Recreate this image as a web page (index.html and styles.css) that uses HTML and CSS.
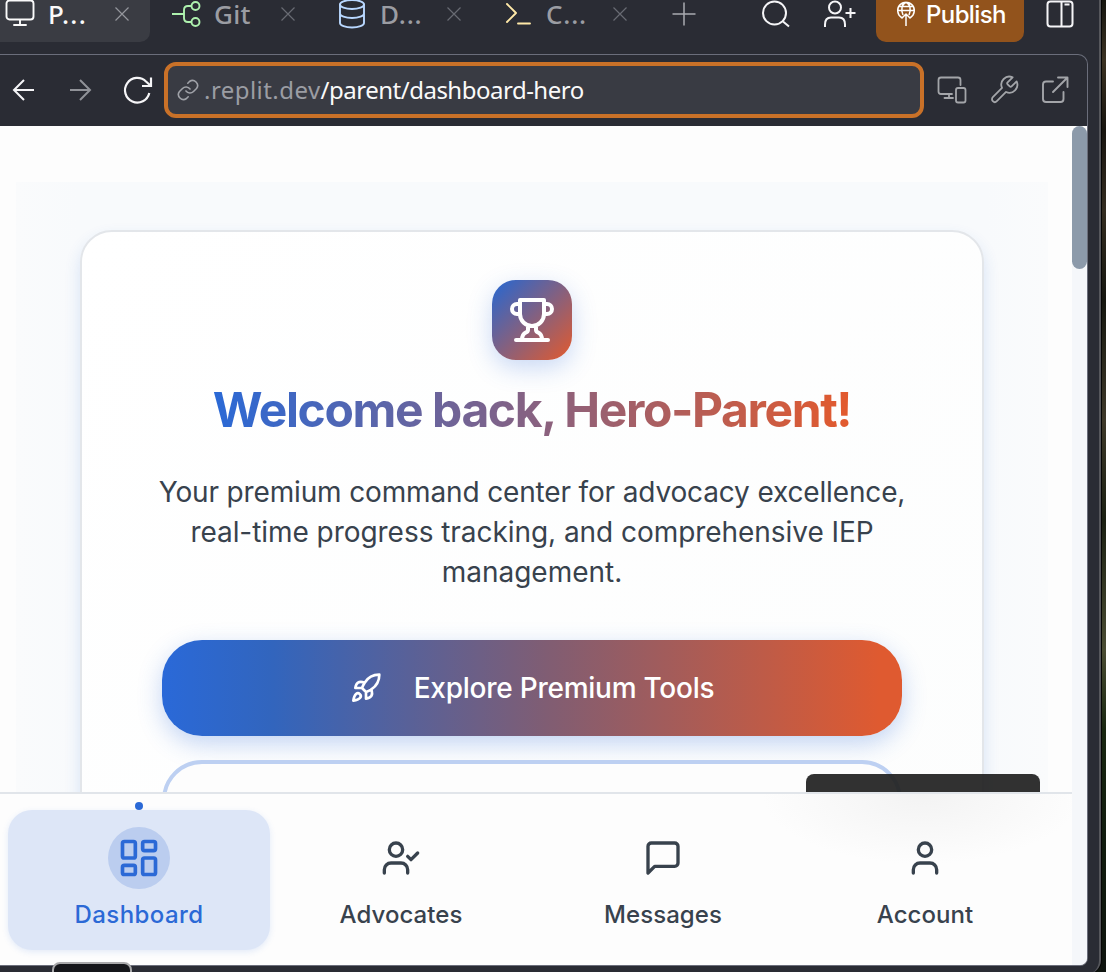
FILE: index.html
```html
<!DOCTYPE html>
<html lang="en">
<head>
<meta charset="utf-8">
<title>Parent dashboard</title>
<link rel="stylesheet" href="styles.css">
</head>
<body>
<div class="window">
  <header class="tabbar">
    <div class="tab tab-active">
      <svg class="tab-icon" viewBox="0 0 32 32"><rect x="2.5" y="2.5" width="27" height="19" rx="3"/><path d="M16 22v5M10 27h12"/></svg>
      <span class="tab-name name-p">P...</span>
      <svg class="tab-close" viewBox="0 0 16 16"><path d="M1.5 1.5l13 13M14.5 1.5l-13 13"/></svg>
    </div>
    <div class="tab">
      <svg class="tab-icon green" viewBox="0 0 32 32"><path d="M2 16h12M22 8h-4q-4 0-4 4v8q0 4 4 4h4" class="branch"/><circle cx="25.500" cy="8" r="4"/><circle cx="25.500" cy="24" r="4"/></svg>
      <span class="tab-name name-git">Git</span>
      <svg class="tab-close" viewBox="0 0 16 16"><path d="M1.500 1.500l13 13M14.500 1.500l-13 13"/></svg>
    </div>
    <div class="tab">
      <svg class="tab-icon blue" viewBox="0 0 32 32"><ellipse cx="16" cy="6.500" rx="12" ry="4.500"/><path d="M4 6.500v18.500c0 2.500 5.400 4.500 12 4.500s12-2 12-4.500V6.500M4 15.500c0 2.500 5.400 4.500 12 4.500s12-2 12-4.500"/></svg>
      <span class="tab-name name-d">D...</span>
      <svg class="tab-close" viewBox="0 0 16 16"><path d="M1.500 1.500l13 13M14.500 1.500l-13 13"/></svg>
    </div>
    <div class="tab">
      <svg class="tab-icon yellow" viewBox="0 0 32 32"><path d="M5 6l9 9-9 9M16 25.500h12"/></svg>
      <span class="tab-name name-c">C...</span>
      <svg class="tab-close" viewBox="0 0 16 16"><path d="M1.500 1.500l13 13M14.500 1.500l-13 13"/></svg>
    </div>
    <svg class="new-tab" viewBox="0 0 24 24"><path d="M12 .500v23M.500 12h23"/></svg>
    <div class="actions">
      <svg class="act search" viewBox="0 0 32 32"><circle cx="14.500" cy="15" r="11.500"/><path d="M23 23.500l6 5"/></svg>
      <svg class="act invite" viewBox="0 0 36 32"><circle cx="13" cy="9.500" r="6"/><path d="M3 29v-2.500q0-7 6-7h8q6 0 6 7V29M28.500 10v10M23.500 15h10"/></svg>
      <button class="publish">
        <svg viewBox="0 0 20 28"><path d="M5.500 18.500A8.300 8.300 0 1 1 14.500 18.500M2 11.500h16M7 16C4.500 10 6 5 10 3.200 14 5 15.500 10 13 16M10 27V15M5.500 19.500l4.500-4.500 4.500 4.500M3.500 7.500h13"/></svg>
        <span>Publish</span>
      </button>
      <svg class="act layout" viewBox="0 0 32 32"><rect x="3.500" y="3.500" width="25" height="25" rx="3"/><path d="M17.500 3.500v25M20.500 6.500h5"/></svg>
    </div>
  </header>

  <section class="pane">
    <div class="toolbar">
      <svg class="nav-arrow" viewBox="0 0 24 24"><path d="M22 12H2.500M12 2l-10 10 10 10"/></svg>
      <svg class="nav-arrow dim" viewBox="0 0 24 24"><path d="M2 12h19.500M12 2l10 10-10 10"/></svg>
      <svg class="reload" viewBox="0 0 32 32"><path d="M28.300 19A12.300 12.300 0 1 1 25 7.500L30 12M30 3.500V12h-9"/></svg>
      <div class="address">
        <svg viewBox="0 0 24 24"><path d="M10 13a5 5 0 0 0 7.500.5l3-3a5 5 0 0 0-7-7l-1.700 1.700M14 11a5 5 0 0 0-7.500-.5l-3 3a5 5 0 0 0 7 7l1.700-1.700"/></svg>
        <span class="url"><span class="host">.replit.dev</span>/parent/dashboard-hero</span>
      </div>
      <svg class="tool devices" viewBox="0 0 32 32"><path d="M16 20H5q-2.500 0-2.500-2.500V6Q2.500 3.500 5 3.500h17q2.500 0 2.500 2.500v5M13 20v4M8.500 24H17"/><rect x="20" y="14" width="9.500" height="14.500" rx="2"/></svg>
      <svg class="tool wrench" viewBox="0 0 24 24"><path d="M14.700 6.300a1 1 0 0 0 0 1.400l1.600 1.600a1 1 0 0 0 1.400 0l3.770-3.770a6 6 0 0 1-7.940 7.940l-6.910 6.910a2.120 2.120 0 0 1-3-3l6.910-6.910a6 6 0 0 1 7.940-7.940l-3.760 3.760z"/></svg>
      <svg class="tool external" viewBox="0 0 32 32"><path d="M14 7.500H7Q4 7.500 4 10.500V25q0 3 3 3h14.500q3 0 3-3v-7M19 3.500h9.500V13M28.500 3.500L14 18"/></svg>
    </div>

    <div class="viewport">
      <main class="page">
        <div class="hero-area">
          <div class="card">
            <div class="trophy">
              <svg viewBox="0 0 24 24"><path d="M6 9H4.500a2.500 2.500 0 0 1 0-5H6M18 9h1.500a2.500 2.500 0 0 0 0-5H18M4 22h16M10 14.660V17c0 .55-.47.98-.97 1.210C7.850 18.750 7 20.240 7 22M14 14.660V17c0 .55.470.98.970 1.210C16.150 18.750 17 20.240 17 22M18 2H6v7a6 6 0 0 0 12 0V2Z"/></svg>
            </div>
            <h1>Welcome back, Hero-Parent!</h1>
            <p><span class="line-first">Your premium command center for advocacy excellence,</span><br><span class="line-second">real-time progress tracking, and comprehensive IEP</span><br>management.</p>
            <button class="primary">
              <svg viewBox="0 0 24 24"><path d="M4.500 16.500c-1.500 1.260-2 5-2 5s3.740-.5 5-2c.710-.840.700-2.130-.090-2.910a2.180 2.180 0 0 0-2.910-.090zM12 15l-3-3a22 22 0 0 1 2-3.950A12.880 12.880 0 0 1 22 2c0 2.720-.780 7.500-6 11a22.350 22.350 0 0 1-4 2zM9 12H4s.550-3.030 2-4c1.620-1.080 5 0 5 0M12 15v5s3.030-.550 4-2c1.080-1.620 0-5 0-5"/></svg>
              <span>Explore Premium Tools</span>
            </button>
            <div class="secondary"></div>
          </div>
        </div>
        <div class="toast"></div>
        <nav class="bottom-nav">
          <a class="item item-active">
            <i class="dot"></i>
            <span class="bubble"><svg viewBox="0 0 24 24"><rect x="3" y="3" width="7" height="9" rx="1"/><rect x="14" y="3" width="7" height="5" rx="1"/><rect x="14" y="12" width="7" height="9" rx="1"/><rect x="3" y="16" width="7" height="5" rx="1"/></svg></span>
            <span class="label">Dashboard</span>
          </a>
          <a class="item">
            <span class="bubble"><svg viewBox="0 0 24 24"><path d="M16 21v-2a4 4 0 0 0-4-4H6a4 4 0 0 0-4 4v2"/><circle cx="9" cy="7" r="4"/><path d="M16 11l2 2 4-4"/></svg></span>
            <span class="label">Advocates</span>
          </a>
          <a class="item">
            <span class="bubble"><svg viewBox="0 0 24 24"><path d="M21 15a2 2 0 0 1-2 2H7l-4 4V5a2 2 0 0 1 2-2h14a2 2 0 0 1 2 2z"/></svg></span>
            <span class="label">Messages</span>
          </a>
          <a class="item">
            <span class="bubble"><svg viewBox="0 0 24 24"><path d="M19 21v-2a4 4 0 0 0-4-4H9a4 4 0 0 0-4 4v2"/><circle cx="12" cy="7" r="4"/></svg></span>
            <span class="label">Account</span>
          </a>
        </nav>
      </main>
      <div class="scrollbar"><div class="thumb"></div></div>
    </div>
  </section>
  <div class="dock-tip"></div>
</div>
</body>
</html>
```
FILE: styles.css
```css
* { box-sizing: border-box; }
body {
  margin: 0;
  width: 1106px;
  height: 972px;
  overflow: hidden;
  background: linear-gradient(180deg, #15150f 0, #3a3122 60px, #17140f 130px, #332c20 210px, #15160f 300px, #3d3829 420px, #1a1f12 520px, #4a4c33 650px, #182610 730px, #101b0e 850px, #0e130e 100%);
  font-family: Inter, "Liberation Sans", sans-serif;
}
svg { display: block; flex: none; fill: none; stroke: currentColor; stroke-linecap: round; stroke-linejoin: round; }
button { font: inherit; border: 0; padding: 0; }

.window {
  position: relative;
  width: 1101px;
  height: 974px;
  background: #2a2c34;
  border-right: 2px solid #56575c;
  border-radius: 0 0 14px 0;
  box-shadow: 0 0 0 1px #050505;
}

/* Tab bar */
.tabbar { display: flex; height: 54px; align-items: flex-start; color: #f5f5f7; }
.tab {
  display: flex;
  width: 150px;
  height: 42px;
  margin-right: 16px;
  padding: 0 20px 0 4px;
  color: #9b9da3;
}
.tab-active { background: #3a3c43; color: #fafafa; border-radius: 0 0 10px 0; }
.tab-icon { width: 32px; height: 32px; margin: -2px 12px 0 0; stroke-width: 1.9; }
.branch { stroke-linecap: butt; }
.tab-name { flex: 1; font: 500 26px/28px "Noto Sans", sans-serif; letter-spacing: .3px; white-space: nowrap; }
.name-p { letter-spacing: 1.4px; }
.name-d, .name-c { letter-spacing: .8px; }
.tab-close { width: 16px; height: 16px; margin: 6px 0 0; stroke-width: 1.200; color: #686b73; stroke-linecap: butt; }
.tab-active .tab-close { color: #94969c; }
.green { color: #aef2ae; }
.blue { color: #b9d8ff; }
.yellow { color: #ffe9a8; }
.new-tab { width: 24px; height: 24px; margin: 2px 0 0 8px; stroke-width: 1.500; color: #a9abb0; stroke-linecap: butt; }
.actions { display: flex; margin-left: 64px; }
.act { height: 32px; margin-top: -2px; stroke-width: 2; stroke-linecap: butt; }
.search { width: 32px; }
.invite { width: 36px; margin-left: 30px; }
.publish {
  display: flex;
  width: 148px;
  height: 42px;
  margin-left: 18px;
  padding: 0 0 0 20px;
  background: #92531c;
  color: #fff;
  border-radius: 0 0 10px 10px;
}
.publish svg { width: 20px; height: 28px; margin-top: -1px; stroke-width: 1.500; stroke-linecap: butt; }
.publish span { font: 500 24px/30px Inter, sans-serif; margin-left: 10px; letter-spacing: -.6px; }
.layout { width: 32px; margin-left: 20px; }

/* Preview pane */
.pane {
  width: 1088px;
  height: 912px;
  border: solid #6b6e7b;
  border-width: 1px 1px 1px 0;
  border-radius: 0 10px 8px 0;
  overflow: hidden;
}
.toolbar { display: flex; height: 71px; padding-bottom: 1px; align-items: center; color: #f5f5f7; }
.nav-arrow { width: 24px; height: 24px; margin-left: 12px; stroke-width: 2; stroke-linecap: butt; stroke-linejoin: miter; }
.dim { color: #909298; margin-left: 32px; }
.reload { width: 32px; height: 32px; margin-left: 29px; stroke-width: 2.200; stroke-linecap: butt; stroke-linejoin: miter; }
.address {
  display: flex;
  align-items: center;
  width: 760px;
  height: 56px;
  margin-left: 11px;
  padding-left: 8px;
  border: 4px solid #c97128;
  border-radius: 12px;
  background: #393b43;
}
.address svg { width: 24px; height: 24px; color: #a0a2a8; stroke-width: 1.600; }
.url { margin-left: 4px; font: 400 24px/32px "Noto Sans", sans-serif; letter-spacing: -.5px; color: #fafafa; white-space: nowrap; }
.host { color: #9b9da3; letter-spacing: .45px; }
.tool { color: #a3a5a9; }
.devices { width: 32px; height: 32px; margin-left: 12px; stroke-width: 1.800; }
.wrench { width: 32px; height: 32px; margin-left: 20px; stroke-width: 1.350; }
.external { width: 32px; height: 32px; margin-left: 19px; stroke-width: 1.900; }

/* Page */
.viewport { display: flex; height: 839px; background: #fdfdfd; }
.page { position: relative; display: flex; flex-direction: column; width: 1072px; padding-top: 56px; }
.hero-area {
  width: 1032px;
  height: 610px;
  flex: none;
  margin-left: 16px;
  padding: 48px 64px 0;
  overflow: hidden;
  background: linear-gradient(90deg, #fafbfc, #f8fafc 6%, #f8fafc 94%, #fafbfc);
}
.card {
  display: flex;
  flex-direction: column;
  align-items: center;
  height: 800px;
  padding: 48px 80px 0;
  border: 2px solid #e3e6ea;
  border-radius: 32px;
  background: linear-gradient(135deg, #fff, #fcfdfd);
  box-shadow: 0 8px 16px rgba(44, 105, 214, .16);
}
.trophy {
  display: flex;
  flex: none;
  width: 80px;
  height: 80px;
  align-items: center;
  justify-content: center;
  border-radius: 24px;
  color: #fff;
  background: linear-gradient(135deg, #2467d3, #e35a2d);
  box-shadow: 0 8px 24px rgba(44, 105, 214, .25);
}
.trophy svg { width: 48px; height: 48px; stroke-width: 2; }
h1 {
  margin: 20px 0 0;
  font-size: 48px;
  line-height: 60px;
  font-weight: 700;
  letter-spacing: -1.400px;
  white-space: nowrap;
  color: transparent;
  background: linear-gradient(90deg, #2a69d6, #e35a2d);
  -webkit-background-clip: text;
  background-clip: text;
}
p {
  margin: 32px 0 0;
  font-size: 28px;
  line-height: 40px;
  color: #38424d;
  text-align: center;
  white-space: nowrap;
}
.line-first { letter-spacing: -.15px; }
.line-second { letter-spacing: -.05px; }
.primary {
  display: flex;
  flex: none;
  align-items: center;
  justify-content: center;
  width: 740px;
  height: 96px;
  margin-top: 48px;
  border-radius: 40px;
  color: #fff;
  background: linear-gradient(90deg, #2a69d8, #3265bd 15%, #805d73 52%, #df5a30 97%);
  box-shadow: 0 8px 24px rgba(44, 105, 214, .28);
}
.primary svg { width: 32px; height: 32px; margin-right: 32px; stroke-width: 2; }
.primary span { font-size: 28px; font-weight: 500; line-height: 40px; letter-spacing: -.25px; }
.secondary {
  flex: none;
  width: 740px;
  height: 96px;
  margin-top: 24px;
  border: 4px solid #bdd0f2;
  border-radius: 40px;
  background: #fdfdfd;
}
.toast {
  position: absolute;
  left: 806px;
  top: 648px;
  width: 234px;
  height: 40px;
  border-radius: 8px;
  background: rgba(31, 31, 31, .92);
}

/* Bottom navigation */
.bottom-nav {
  position: relative;
  display: flex;
  height: 173px;
  padding: 16px 0 0 8px;
  border-top: 2px solid #e1e5ea;
  background: radial-gradient(ellipse 160px 70px at 922px 0, #f3f3f3, rgba(253, 253, 253, 0)), #fdfdfd;
}
.item {
  position: relative;
  display: flex;
  flex-direction: column;
  align-items: center;
  width: 262px;
  height: 140px;
  padding-top: 17px;
  border-radius: 24px;
  color: #38424d;
}
.item-active { color: #2b69d6; background: #dde6f7; box-shadow: 0 2px 6px rgba(44, 105, 214, .13); }
.dot { position: absolute; left: 127px; top: -8px; width: 8px; height: 8px; border-radius: 50%; background: #2b69d6; }
.bubble { display: flex; align-items: center; justify-content: center; width: 62px; height: 62px; border-radius: 50%; }
.item-active .bubble { background: #bbcdef; }
.bubble svg { width: 40px; height: 40px; stroke-width: 2; }
.item-active svg { width: 44px; height: 44px; }
.label { margin-top: 9px; font-size: 24px; line-height: 34px; font-weight: 450; letter-spacing: .05px; }
.item-active .label { font-weight: 500; letter-spacing: .4px; }

.scrollbar { width: 15px; background: linear-gradient(#fdfdfd 16px, #f5f7fa 16px); }
.thumb { height: 143px; border-radius: 8px; background: #8c9aaa; }
.dock-tip {
  position: absolute;
  left: 52px;
  top: 962px;
  width: 80px;
  height: 20px;
  border: 2px solid #a9a9ab;
  border-radius: 8px;
  background: #15161a;
}
```
